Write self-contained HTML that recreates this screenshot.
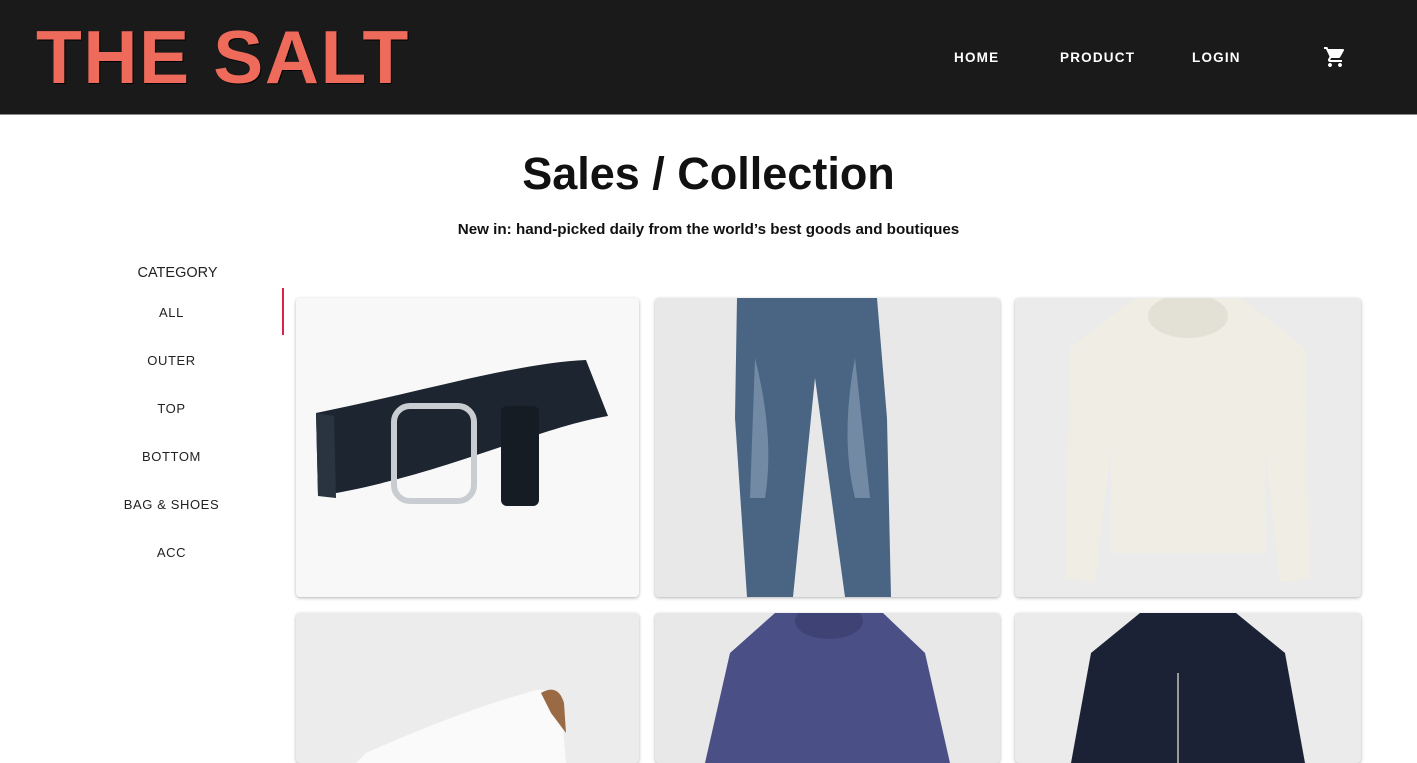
<!DOCTYPE html>
<html><head><meta charset="utf-8"><style>
*{margin:0;padding:0;box-sizing:border-box}
body{width:1417px;height:755px;overflow:hidden;background:#fff;font-family:"Liberation Sans",sans-serif;position:relative}
header{position:absolute;left:0;top:0;width:1417px;height:115px;background:#1a1a1a;border-bottom:1px solid #888}
.logo{position:absolute;left:36px;top:17px;font-size:75px;font-weight:bold;color:#ee6a5b;letter-spacing:1.6px;text-shadow:1px 1px 0 #000;line-height:80px}
.nav{position:absolute;top:50px;color:#fff;font-size:13.5px;font-weight:bold;letter-spacing:1.2px}
h1{position:absolute;left:0;width:1417px;top:148px;text-align:center;font-size:45px;font-weight:bold;color:#111}
.sub{position:absolute;left:0;width:1417px;top:221px;text-align:center;font-size:15.2px;font-weight:bold;color:#111}
.cat{position:absolute;left:110px;width:123px;text-align:center;font-size:13px;color:#222;letter-spacing:.6px}
.card{position:absolute;border-radius:4px;box-shadow:0 1px 3px rgba(0,0,0,.3);overflow:hidden}
</style></head><body>
<header>
<div class="logo">THE SALT</div>
<div class="nav" style="left:954px">HOME</div>
<div class="nav" style="left:1060px">PRODUCT</div>
<div class="nav" style="left:1192px">LOGIN</div>
<svg style="position:absolute;left:1323px;top:45px" width="24" height="24" viewBox="0 0 24 24"><path fill="#fff" d="M7 18c-1.1 0-2 .9-2 2s.9 2 2 2 2-.9 2-2-.9-2-2-2zM1 2v2h2l3.6 7.6-1.35 2.4C4.5 15.4 5.5 17 7 17h12v-2H7.4c-.1 0-.2-.1-.1-.3L8.1 13h7.5c.75 0 1.4-.4 1.7-1l3.6-6.5c.3-.6-.1-1.5-.9-1.5H5.2L4.3 2H1zm16 16c-1.1 0-2 .9-2 2s.9 2 2 2 2-.9 2-2-.9-2-2-2z"/></svg>
</header>
<h1>Sales / Collection</h1>
<div class="sub">New in: hand-picked daily from the world’s best goods and boutiques</div>
<div class="cat" style="top:265px;font-size:14.5px;letter-spacing:0;left:116px">CATEGORY</div>
<div style="position:absolute;left:282px;top:288px;width:2px;height:47px;background:#e0204a"></div>
<div class="cat" style="top:305px">ALL</div>
<div class="cat" style="top:353px">OUTER</div>
<div class="cat" style="top:401px">TOP</div>
<div class="cat" style="top:449px">BOTTOM</div>
<div class="cat" style="top:497px">BAG &amp; SHOES</div>
<div class="cat" style="top:545px">ACC</div>

<div class="card" style="left:296px;top:298px;width:343px;height:299px;background:#f8f8f8">
<svg width="343" height="299"><path d="M20 115 C120 95 220 65 290 62 L312 118 C240 130 140 180 22 198 Z" fill="#1c2530"/><path d="M20 115 L22 198 L40 200 L38 118Z" fill="#2a3440"/><rect x="98" y="108" width="80" height="95" rx="16" fill="none" stroke="#c9ccd0" stroke-width="6"/><rect x="205" y="108" width="38" height="100" rx="6" fill="#151c24"/></svg>
</div>
<div class="card" style="left:655px;top:298px;width:345px;height:299px;background:#e8e8e8">
<svg width="345" height="299"><path d="M82 0 L222 0 L232 120 L236 299 L190 299 L160 80 L138 299 L92 299 L80 120Z" fill="#4a6584"/><path d="M100 60 Q120 140 110 200 L95 200 Z M200 60 Q185 140 200 200 L215 200Z" fill="#8ea3b8" opacity=".6"/></svg>
</div>
<div class="card" style="left:1015px;top:298px;width:346px;height:299px;background:#ebebeb">
<svg width="346" height="299"><path d="M120 0 L226 0 L290 50 L295 280 L265 285 L250 150 L250 255 L96 255 L96 150 L80 285 L50 280 L55 50 Z" fill="#efede4"/><ellipse cx="173" cy="18" rx="40" ry="22" fill="#e3e0d6"/></svg>
</div>
<div class="card" style="left:296px;top:613px;width:343px;height:150px;background:#ececec">
<svg width="343" height="150"><path d="M70 140 Q160 100 230 80 Q255 70 265 90 L270 150 L60 150Z" fill="#fafafa"/><path d="M245 80 Q262 70 268 90 L270 120 L255 100Z" fill="#9a6a44"/></svg>
</div>
<div class="card" style="left:655px;top:613px;width:345px;height:150px;background:#e8e8e8">
<svg width="345" height="150"><path d="M120 0 L228 0 L270 40 L295 150 L50 150 L75 40Z" fill="#4a4f86"/><ellipse cx="174" cy="8" rx="34" ry="18" fill="#3e4275"/></svg>
</div>
<div class="card" style="left:1015px;top:613px;width:346px;height:150px;background:#ebebeb">
<svg width="346" height="150"><path d="M125 0 L221 0 L270 40 L290 150 L56 150 L76 40Z" fill="#1c2236"/><line x1="163" y1="60" x2="163" y2="150" stroke="#999" stroke-width="2"/></svg>
</div>
</body></html>
